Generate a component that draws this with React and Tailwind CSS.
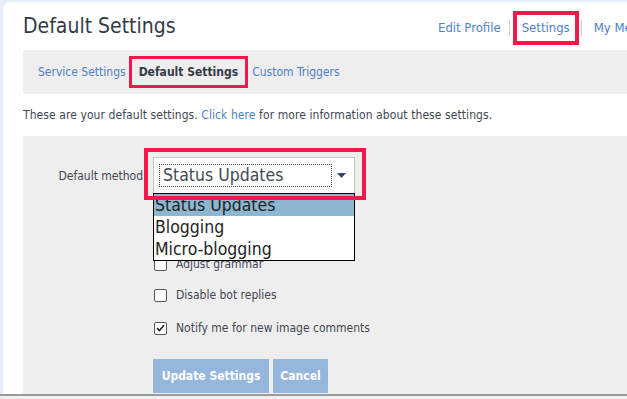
import React from "react";

const F = { fontFamily: '"DejaVu Sans Condensed", "DejaVu Sans", sans-serif' };

function Check({ checked }) {
  return (
    <span className="flex h-[13px] w-[13px] shrink-0 items-center justify-center rounded-[2px] border border-[#4b5563] bg-white">
      {checked && (
        <svg width="9" height="8" viewBox="0 0 9 8">
          <path d="M1 4.2 L3.4 6.5 L8 1.3" stroke="#222" strokeWidth="1.6" fill="none" />
        </svg>
      )}
    </span>
  );
}

export default function App() {
  return (
    <div className="relative h-[399px] w-[627px] overflow-hidden bg-[#e8eef8]" style={F}>
      <div className="flex h-[394px] flex-col pl-[3px] pt-[2px]">
        <div className="flex-1 rounded-tl-[7px] bg-white">
          {/* Header */}
          <div className="flex h-[48px] items-center whitespace-nowrap">
            <div className="w-[435px] shrink-0 pl-[20px] pt-[2px] text-[21px] text-[#333a45]">Default Settings</div>
            <div className="flex shrink-0 items-center pt-[4px] text-[13px] text-[#4f7fc6]">
              <span>Edit Profile</span>
              <span className="ml-[8px] mr-[3px] h-[16px] w-px bg-[#d4d4d4]" />
              <span className="flex h-[34px] items-center border-4 border-[#f4174a] px-[5px]">Settings</span>
              <span className="ml-[2px] mr-[12px] h-[16px] w-px bg-[#d4d4d4]" />
              <span>My Messages</span>
            </div>
          </div>
          {/* Tabs */}
          <div className="ml-[20px] flex h-[44px] items-center whitespace-nowrap bg-[#eeeeee] pl-[15px] text-[12px] text-[#4f7fc6]">
            <span>Service Settings</span>
            <span className="ml-[3px] mr-[4px] flex h-[32px] items-center border-[3px] border-[#f4174a] px-[7px] font-bold text-[#333a45]">
              Default Settings
            </span>
            <span>Custom Triggers</span>
          </div>
          {/* Description */}
          <div className="flex h-[42px] items-center whitespace-nowrap pl-[20px] text-[12px] tracking-[0.08px] text-[#414753]">
            These are your default settings.&nbsp;<span className="text-[#4f7fc6]">Click here</span>&nbsp;for more information about these settings.
          </div>
          {/* Form */}
          <div className="relative ml-[20px] h-[258px] overflow-hidden bg-[#eeeeee] text-[12px] text-[#414753]">
            <div className="flex items-center pt-[21px]">
              <div className="w-[120px] whitespace-nowrap text-right">Default method</div>
              <div className="ml-[10px] flex h-[37px] w-[202px] items-center border border-[#c4c4c4] bg-white pl-[5px] pr-[8px]">
                <div className="flex h-[23px] flex-1 items-center border border-dotted border-[#444] pl-[3px] text-[17.5px] text-[#444a55]">
                  Status Updates
                </div>
                <svg width="9" height="5" viewBox="0 0 9 5" className="ml-[5px]">
                  <path d="M0 0 H9 L4.5 5 Z" fill="#2a4a70" />
                </svg>
              </div>
            </div>
            <div className="ml-[131px] mt-[61px] flex flex-col gap-[13px] whitespace-nowrap leading-[18px]">
              <div className="flex items-center gap-[9px]"><Check /><span>Adjust grammar</span></div>
              <div className="flex items-center gap-[9px]"><Check /><span>Disable bot replies</span></div>
              <div className="mt-[2px] flex items-center gap-[9px]"><Check checked /><span>Notify me for new image comments</span></div>
            </div>
            <div className="ml-[130px] mt-[22px] flex gap-[4px] text-[12px] font-bold text-white">
              <span className="flex h-[34px] w-[116px] items-center justify-center bg-[#95b7dc]">Update Settings</span>
              <span className="flex h-[34px] w-[55px] items-center justify-center bg-[#95b7dc]">Cancel</span>
            </div>
            {/* Open dropdown list */}
            <div className="absolute left-[130px] top-[57px] w-[202px] border border-black bg-white text-[17.5px] leading-[22px] text-[#222]">
              <div className="bg-[#8db7d0] pl-[1px]">Status Updates</div>
              <div className="pl-[1px]">Blogging</div>
              <div className="pl-[1px]">Micro-blogging</div>
            </div>
            {/* Annotation box */}
            <div className="absolute left-[121px] top-[12px] h-[52px] w-[222px] border-4 border-[#f4174a]" />
          </div>
        </div>
      </div>
      <div className="h-[2px] bg-[#9a9a9a]" />
      <div className="h-[3px] bg-[#f0f0f0]" />
    </div>
  );
}
